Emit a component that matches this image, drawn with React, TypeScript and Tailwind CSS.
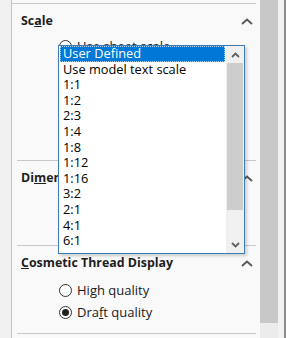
import React from "react";

const Chevron = ({ className = "" }: { className?: string }) => (
  <svg width="12" height="7" viewBox="0 0 12 7" className={className}>
    <path d="M1 6 L6 1.5 L11 6" fill="none" stroke="#5a5a5a" strokeWidth="2" />
  </svg>
);

const Radio = ({ checked, children }: { checked?: boolean; children: React.ReactNode }) => (
  <div className="flex items-center h-[16px] pl-[47px] gap-[5px]">
    <span className="w-[13px] h-[13px] rounded-full border border-[#333] bg-white flex items-center justify-center shrink-0">
      {checked && <span className="w-[7px] h-[7px] rounded-full bg-[#222]" />}
    </span>
    <span className="text-[13px] leading-[16px] text-[#1a1a1a]">{children}</span>
  </div>
);

const Heading = ({ children }: { children: React.ReactNode }) => (
  <div className="flex items-center justify-between h-[16px] pl-[9px] pr-[7px]">
    <span className="text-[12.4px] leading-[16px] font-bold text-[#1e1e1e]">{children}</span>
    <Chevron />
  </div>
);

const Line = () => <div className="h-px bg-[#c8c8c8] ml-[5px] mr-[4px]" />;

const items = [
  "User Defined",
  "Use model text scale",
  "1:1",
  "1:2",
  "2:3",
  "1:4",
  "1:8",
  "1:12",
  "1:16",
  "3:2",
  "2:1",
  "4:1",
  "6:1",
];

export default function App() {
  return (
    <div className="relative w-[286px] h-[338px] flex overflow-hidden bg-white font-['Open_Sans',sans-serif]">
      <div className="w-[12px] bg-[#f0f0f0] border-r border-[#c4c4c4]" />
      <div className="w-[248px] bg-[#f9f9f9] flex flex-col">
        <div className="h-[3px]" />
        <div className="h-px bg-[#c8c8c8] mr-[4px]" />
        <div className="h-[9px]" />
        <Heading>
          Sc<u>a</u>le
        </Heading>
        <div className="h-[9px]" />
        <Radio>Use sheet scale</Radio>
        <div className="h-[106px]" />
        <Line />
        <div className="h-[9px]" />
        <Heading>
          Di<u>m</u>ensions
        </Heading>
        <div className="h-[59px]" />
        <Line />
        <div className="h-[9px]" />
        <Heading>
          <u>C</u>osmetic Thread Display
        </Heading>
        <div className="h-[11px]" />
        <Radio>
          Hi<u>g</u>h quality
        </Radio>
        <div className="h-[6px]" />
        <Radio checked>
          Dra<u>f</u>t quality
        </Radio>
        <div className="h-[13px]" />
        <Line />
      </div>
      <div className="w-[18px] flex flex-col">
        <div className="h-[323px] bg-[#c8c8c8]" />
        <div className="flex-1 bg-[#ececec]" />
      </div>
      <div className="w-[6px] bg-[#f2f2f2]" />
      <div className="w-[2px] bg-[#8c8c8c]" />

      <div className="absolute left-[58px] top-[45px] w-[187px] h-[209px] border border-[#3f7cb4] bg-white flex shadow-[2px_2px_3px_rgba(0,0,0,0.18)]">
        <div className="flex-1 flex flex-col pl-[1px] pr-[1px]">
          {items.map((t, i) => (
            <div
              key={t}
              className={
                i === 0
                  ? "h-[15.6px] leading-[15.6px] pl-[3px] text-[12.8px] bg-[#0078d7] text-white outline-1 outline-dotted outline-[#ffffffaa] -outline-offset-1"
                  : "h-[15.6px] leading-[15.6px] pl-[3px] text-[12.8px] text-black"
              }
            >
              {t}
            </div>
          ))}
        </div>
        <div className="w-[18px] flex flex-col bg-[#f0f0f0]">
          <div className="h-[17px] flex items-center justify-center">
            <svg width="9" height="6" viewBox="0 0 9 6">
              <path d="M1 5 L4.5 1.5 L8 5" fill="none" stroke="#606060" strokeWidth="1.8" />
            </svg>
          </div>
          <div className="h-[147px] bg-[#cdcdcd] mx-[1px]" />
          <div className="flex-1" />
          <div className="h-[17px] flex items-center justify-center">
            <svg width="9" height="6" viewBox="0 0 9 6">
              <path d="M1 1 L4.5 4.5 L8 1" fill="none" stroke="#606060" strokeWidth="1.8" />
            </svg>
          </div>
        </div>
      </div>
    </div>
  );
}
